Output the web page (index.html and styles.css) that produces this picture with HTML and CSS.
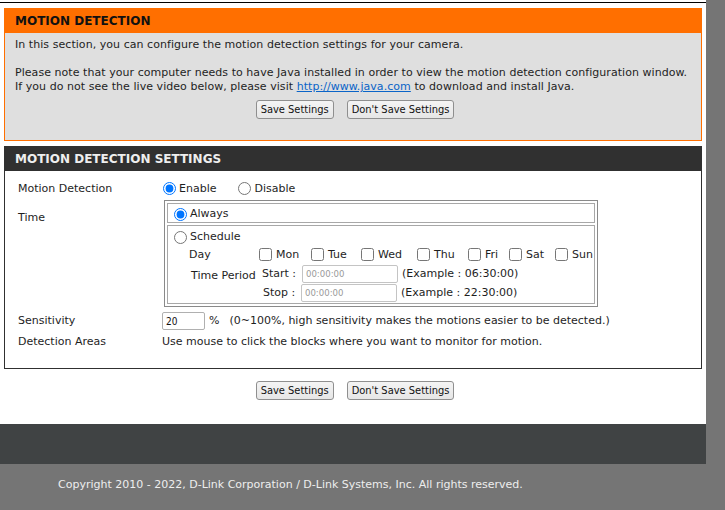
FILE: index.html
```html
<!DOCTYPE html>
<html>
<head>
<meta charset="utf-8">
<title>Motion Detection</title>
<link rel="stylesheet" href="styles.css">
</head>
<body>
<div class="page">
  <div class="main">
    <div class="content">
      <section class="box intro">
        <div class="box-title">MOTION DETECTION</div>
        <div class="box-body">
          <p>In this section, you can configure the motion detection settings for your camera.</p>
          <p>Please note that your computer needs to have Java installed in order to view the motion detection configuration window.<br>If you do not see the live video below, please visit <a href="#">http://www.java.com</a> to download and install Java.</p>
          <div class="buttons"><button class="btn">Save Settings</button><button class="btn">Don't Save Settings</button></div>
        </div>
      </section>

      <section class="box settings">
        <div class="box-title dark">MOTION DETECTION SETTINGS</div>
        <div class="form">
          <div class="label row1">Motion Detection</div>
          <div class="value row1">
            <label class="opt enable"><input type="radio" name="md" checked>Enable</label>
            <label class="opt"><input type="radio" name="md">Disable</label>
          </div>

          <div class="label time-label">Time</div>
          <div class="value time-value">
            <div class="time-table">
              <div class="cell always">
                <label class="opt"><input type="radio" name="tm" checked>Always</label>
              </div>
              <div class="cell schedule">
                <label class="opt sched"><input type="radio" name="tm">Schedule</label>
                <div class="sched-grid">
                  <div class="sg-label day">Day</div>
                  <div class="days">
                    <label class="chk d-mon"><input type="checkbox">Mon</label>
                    <label class="chk d-tue"><input type="checkbox">Tue</label>
                    <label class="chk d-wed"><input type="checkbox">Wed</label>
                    <label class="chk d-thu"><input type="checkbox">Thu</label>
                    <label class="chk d-fri"><input type="checkbox">Fri</label>
                    <label class="chk d-sat"><input type="checkbox">Sat</label>
                    <label class="chk d-sun"><input type="checkbox">Sun</label>
                  </div>
                  <div class="sg-label period">Time Period</div>
                  <div class="periods">
                    <div class="prow start"><span class="pl">Start :</span><input class="tinput" type="text" placeholder="00:00:00"><span class="ex">(Example : 06:30:00)</span></div>
                    <div class="prow stop"><span class="pl">Stop :</span><input class="tinput" type="text" placeholder="00:00:00"><span class="ex">(Example : 22:30:00)</span></div>
                  </div>
                </div>
              </div>
            </div>
          </div>

          <div class="label sens">Sensitivity</div>
          <div class="value sens"><input class="sinput" type="text" value="20"><span class="pct">%</span><span>(0~100%, high sensitivity makes the motions easier to be detected.)</span></div>

          <div class="label areas">Detection Areas</div>
          <div class="value areas">Use mouse to click the blocks where you want to monitor for motion.</div>
        </div>
      </section>

      <div class="buttons bottom"><button class="btn">Save Settings</button><button class="btn">Don't Save Settings</button></div>
    </div>
    <div class="band"></div>
  </div>
  <footer class="copyright">Copyright 2010 - 2022, D-Link Corporation / D-Link Systems, Inc. All rights reserved.</footer>
</div>
</body>
</html>
```

FILE: styles.css
```css
html, body {
  margin: 0;
  padding: 0;
}
body {
  background: #757575;
  font-family: "DejaVu Sans", sans-serif;
  font-size: 11px;
  color: #1e1e1e;
  height: 510px;
  overflow: hidden;
}
.page {
  width: 725px;
}
.main {
  width: 706px;
  background: #fff;
  padding-top: 2px;
}
.content {
  border-top: 1px solid #000;
  padding: 5px 4px 0;
}
.box {
  box-sizing: border-box;
  width: 698px;
}
.intro {
  border: 1px solid #ff6f00;
  background: #dfdfdf;
}
.box-title {
  height: 24px;
  line-height: 25px;
  background: #ff6f00;
  color: #111;
  font-weight: bold;
  font-size: 12px;
  padding-left: 10px;
}
.box-title.dark {
  background: #303030;
  color: #eeeeee;
  height: 25px;
  line-height: 26px;
}
.box-body {
  padding: 5px 10px 0;
  height: 102px;
}
.box-body p {
  margin: 0 0 14px;
  line-height: 14px;
  white-space: nowrap;
  letter-spacing: 0.05px;
}
.box-body p + p {
  margin-bottom: 0;
}
.box-body a {
  color: #0a64c8;
  text-decoration: underline;
}
.buttons {
  display: flex;
  justify-content: center;
  gap: 13px;
  margin-top: 6px;
  padding-left: 4px;
}
.btn {
  height: 19px;
  padding: 0 4px;
  border: 1px solid #8f8f8f;
  border-radius: 3px;
  background: linear-gradient(#f4f4f4, #e6e6e6);
  font-family: "DejaVu Sans Condensed", "DejaVu Sans", sans-serif;
  font-stretch: condensed;
  font-size: 11px;
  color: #111;
  line-height: 17px;
}
.settings {
  margin-top: 5px;
  border: 1px solid #303030;
  border-top: none;
  background: #fff;
}
.form {
  display: grid;
  grid-template-columns: 144px 1fr;
  padding: 8px 0 19px 13px;
  white-space: nowrap;
}
.label, .value {
  line-height: 14px;
}
.row1 {
  height: 19px;
  display: flex;
  align-items: center;
}
.opt {
  display: inline-flex;
  align-items: center;
}
.opt input {
  margin: 0 3px 0 1px;
  width: 13px;
  height: 13px;
}
.row1 .enable {
  margin-right: 21px;
}
.time-label {
  margin-top: 13px;
}
.time-value {
  margin-top: 2px;
}
.time-table {
  margin-left: 2px;
  width: 434px;
  box-sizing: border-box;
  border: 1px solid #8a8a8a;
  padding: 2px;
  display: flex;
  flex-direction: column;
  gap: 2px;
}
.cell {
  border: 1px solid #a8a8a8;
}
.always {
  box-sizing: border-box;
  height: 20px;
  display: flex;
  align-items: center;
  padding: 2px 0 0 5px;
}
.schedule {
  box-sizing: border-box;
  height: 79px;
  padding-left: 5px;
}
.sched {
  margin-top: 4px;
  height: 14px;
}
.sched-grid {
  display: grid;
  grid-template-columns: 86px 1fr;
  margin-top: -2px;
}
.day {
  padding-left: 16px;
  height: 14px;
  line-height: 18px;
}
.period {
  padding-left: 18px;
  margin-top: 3px;
  line-height: 18px;
}
.days {
  display: flex;
  height: 18px;
  align-items: center;
}
.chk {
  display: inline-flex;
  align-items: center;
}
.chk input {
  margin: 0 4px 0 0;
  width: 13px;
  height: 13px;
}
.d-mon { width: 52px; }
.d-tue { width: 50px; }
.d-wed { width: 56px; }
.d-thu { width: 51px; }
.d-fri { width: 41px; }
.d-sat { width: 46px; }
.periods {
  margin-top: 1px;
  display: flex;
  flex-direction: column;
  gap: 1px;
}
.prow {
  display: flex;
  align-items: center;
  height: 18px;
}
.pl {
  width: 43px;
  padding-left: 3px;
  box-sizing: border-box;
}
.stop .pl {
  padding-left: 4px;
  width: 42px;
}
.tinput {
  box-sizing: border-box;
  width: 96px;
  height: 18px;
  border: 1px solid #c4c4c4;
  border-radius: 2px;
  padding: 0 3px;
  margin: 0 4px 0 0;
  font-family: "DejaVu Sans Condensed", "DejaVu Sans", sans-serif;
  font-stretch: condensed;
  font-size: 9.5px;
  background: #fff;
}
.tinput::placeholder {
  color: #9a9a9a;
}
.sens {
  margin-top: 5px;
  display: flex;
  align-items: center;
  height: 18px;
}
.sinput {
  box-sizing: border-box;
  width: 43px;
  height: 18px;
  border: 1px solid #b0b0b0;
  border-radius: 2px;
  padding: 0 3px;
  margin: 0 4px 0 0;
  font-family: "DejaVu Sans Condensed", "DejaVu Sans", sans-serif;
  font-stretch: condensed;
  font-size: 10px;
  color: #111;
}
.pct {
  margin-right: 10px;
}
.areas {
  margin-top: 5px;
}
.bottom {
  margin-top: 12px;
}
.band {
  margin-top: 24px;
  height: 40px;
  background: #404344;
}
.copyright {
  color: #eeeeee;
  padding: 14px 0 0 58px;
  line-height: 14px;
  white-space: nowrap;
}
```
